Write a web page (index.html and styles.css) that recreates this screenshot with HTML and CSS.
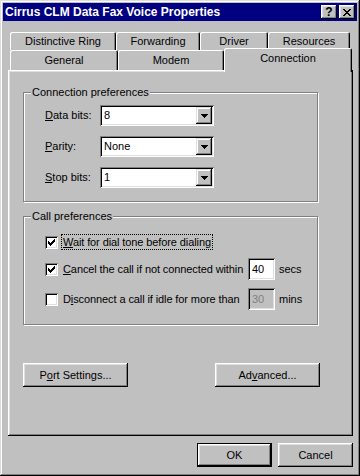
FILE: index.html
```html
<!DOCTYPE html>
<html lang="en">
	<head>
		<meta charset="UTF-8" />
		<title>Cirrus CLM Data Fax Voice Properties</title>
		<link rel="stylesheet" href="styles.css">
	</head>

	<body>
		<div class="window">
			<header class="titlebar">
				<span class="titlebar-text">Cirrus CLM Data Fax Voice Properties</span>
				<div class="titlebar-buttons">
					<span class="caption-btn caption-btn_help">?</span>
					<span class="caption-btn">
						<svg width="8" height="7" viewBox="0 0 8 7" shape-rendering="crispEdges"><path d="M0 0h2v1h-2z M6 0h2v1h-2z M1 1h2v1h-2z M5 1h2v1h-2z M2 2h4v1h-4z M3 3h2v1h-2z M2 4h4v1h-4z M1 5h2v1h-2z M5 5h2v1h-2z M0 6h2v1h-2z M6 6h2v1h-2z" fill="#000"/></svg>
					</span>
				</div>
			</header>

			<div class="sheet">
				<div class="tabs">
					<div class="tab-row tab-row_back">
						<div class="tab tab_ring">Distinctive Ring</div>
						<div class="tab tab_forwarding">Forwarding</div>
						<div class="tab tab_driver">Driver</div>
						<div class="tab tab_resources">Resources</div>
					</div>
					<div class="tab-row tab-row_front">
						<div class="tab tab_general">General</div>
						<div class="tab tab_modem">Modem</div>
						<div class="tab tab_connection tab_active">Connection</div>
					</div>
				</div>

				<main class="panel">
					<section class="group group_connection">
						<div class="group-title">Connection preferences</div>
						<div class="fields">
							<label class="field-label"><u>D</u>ata bits:</label>
							<div class="combo">
								<span class="combo-value">8</span>
								<span class="combo-btn"><svg width="7" height="4" viewBox="0 0 7 4" shape-rendering="crispEdges"><path d="M0 0h7v1h-7z M1 1h5v1h-5z M2 2h3v1h-3z M3 3h1v1h-1z" fill="#000"/></svg></span>
							</div>

							<label class="field-label"><u>P</u>arity:</label>
							<div class="combo">
								<span class="combo-value">None</span>
								<span class="combo-btn"><svg width="7" height="4" viewBox="0 0 7 4" shape-rendering="crispEdges"><path d="M0 0h7v1h-7z M1 1h5v1h-5z M2 2h3v1h-3z M3 3h1v1h-1z" fill="#000"/></svg></span>
							</div>

							<label class="field-label"><u>S</u>top bits:</label>
							<div class="combo">
								<span class="combo-value">1</span>
								<span class="combo-btn"><svg width="7" height="4" viewBox="0 0 7 4" shape-rendering="crispEdges"><path d="M0 0h7v1h-7z M1 1h5v1h-5z M2 2h3v1h-3z M3 3h1v1h-1z" fill="#000"/></svg></span>
							</div>
						</div>
					</section>

					<section class="group group_call">
						<div class="group-title">Call preferences</div>
						<div class="checks">
							<span class="checkbox"><svg width="7" height="7" viewBox="0 0 7 7" shape-rendering="crispEdges"><path d="M6 0h1v1h-1z M5 1h2v1h-2z M0 2h1v1h-1z M4 2h3v1h-3z M0 3h2v1h-2z M3 3h3v1h-3z M0 4h5v1h-5z M1 5h3v1h-3z M2 6h1v1h-1z" fill="#000"/></svg></span>
							<span class="check-label check-label_focus"><u>W</u>ait for dial tone before dialing</span>
							<span></span>
							<span></span>

							<span class="checkbox"><svg width="7" height="7" viewBox="0 0 7 7" shape-rendering="crispEdges"><path d="M6 0h1v1h-1z M5 1h2v1h-2z M0 2h1v1h-1z M4 2h3v1h-3z M0 3h2v1h-2z M3 3h3v1h-3z M0 4h5v1h-5z M1 5h3v1h-3z M2 6h1v1h-1z" fill="#000"/></svg></span>
							<span class="check-label"><u>C</u>ancel the call if not connected within</span>
							<span class="edit">40</span>
							<span class="unit">secs</span>

							<span class="checkbox"></span>
							<span class="check-label">D<u>i</u>sconnect a call if idle for more than</span>
							<span class="edit edit_disabled">30</span>
							<span class="unit">mins</span>
						</div>
					</section>

					<div class="panel-buttons">
						<span class="btn btn_wide">P<u>o</u>rt Settings...</span>
						<span class="btn btn_wide">Ad<u>v</u>anced...</span>
					</div>
				</main>

				<footer class="dialog-buttons">
					<span class="btn btn_default">OK</span>
					<span class="btn">Cancel</span>
				</footer>
			</div>
		</div>
	</body>
</html>
```

FILE: styles.css
```css
html {
	box-sizing: border-box;
}

*,
*::after,
*::before {
	box-sizing: inherit;
}

body {
	margin: 0;
	background-color: #c0c0c0;
	color: #000;
	font-family: "Liberation Sans", Arial, sans-serif;
	font-size: 11px;
	line-height: 13px;
}

u {
	text-decoration-thickness: 1px;
	text-underline-offset: 1px;
}

.window {
	display: flex;
	flex-direction: column;
	width: 360px;
	height: 476px;
	padding: 3px;
	background-color: #c0c0c0;
	box-shadow: inset -1px -1px #000, inset 1px 1px #dfdfdf, inset -2px -2px #808080, inset 2px 2px #fff;
}

/* title bar */

.titlebar {
	display: flex;
	align-items: center;
	justify-content: space-between;
	height: 18px;
	padding: 0 2px;
	background-color: #000080;
	color: #fff;
}

.titlebar-text {
	font-size: 12px;
	font-weight: 700;
}

.titlebar-buttons {
	display: flex;
	gap: 2px;
}

.caption-btn {
	display: flex;
	align-items: center;
	justify-content: center;
	width: 16px;
	height: 14px;
	background-color: #c0c0c0;
	color: #000;
	font-weight: 700;
	box-shadow: inset -1px -1px #000, inset 1px 1px #fff, inset -2px -2px #808080, inset 2px 2px #dfdfdf;
}

.caption-btn_help {
	font-size: 12px;
	padding-top: 1px;
}

/* tabs */

.sheet {
	padding: 11px 4px 0 5px;
}

.tabs {
	padding-left: 2px;
}

.tab-row {
	display: flex;
}

.tab-row_back {
	height: 18px;
}

.tab-row_front {
	height: 20px;
	align-items: flex-start;
}

.tab {
	display: flex;
	justify-content: center;
	padding-top: 3px;
	background-color: #c0c0c0;
	border-radius: 2px 2px 0 0;
	box-shadow: inset 1px 1px #fff, inset -1px 0 #000, inset -2px 0 #808080;
}

.tab-row_back .tab {
	height: 18px;
}

.tab-row_front .tab {
	height: 20px;
	padding-top: 4px;
}

.tab_ring { width: 106px; }
.tab_forwarding { width: 84px; }
.tab_driver { width: 68px; }
.tab_resources { width: 82px; }
.tab_general { width: 108px; }
.tab_modem { width: 106px; }
.tab_connection { width: 128px; }

.tab-row_front .tab_active {
	position: relative;
	z-index: 1;
	height: 24px;
	margin-top: -2px;
	padding-top: 4px;
}

/* panel */

.panel {
	display: flex;
	flex-direction: column;
	align-items: flex-start;
	height: 366px;
	padding: 22px 0 0 15px;
	background-color: #c0c0c0;
	box-shadow: inset -1px -1px #000, inset 1px 1px #fff, inset -2px -2px #808080, inset 2px 2px #dfdfdf;
}

.group {
	width: 295px;
	border: 1px solid #808080;
	box-shadow: inset 1px 1px #fff, 1px 1px #fff;
}

.group_connection {
	height: 110px;
}

.group_call {
	height: 109px;
	margin-top: 14px;
}

.group-title {
	width: fit-content;
	margin: -7px 0 0 7px;
	padding: 0 1px;
	background-color: #c0c0c0;
}

.fields {
	display: grid;
	grid-template-columns: 55px 114px;
	row-gap: 10px;
	align-items: center;
	padding: 6px 0 0 21px;
}

.combo {
	display: flex;
	align-items: center;
	height: 21px;
	padding: 2px;
	background-color: #fff;
	box-shadow: inset 1px 1px #808080, inset -1px -1px #fff, inset 2px 2px #000, inset -2px -2px #dfdfdf;
}

.combo-value {
	flex-grow: 1;
	padding-left: 2px;
}

.combo-btn {
	display: flex;
	align-items: center;
	justify-content: center;
	width: 16px;
	height: 17px;
	background-color: #c0c0c0;
	box-shadow: inset -1px -1px #000, inset 1px 1px #dfdfdf, inset -2px -2px #808080, inset 2px 2px #fff;
}

.checks {
	display: grid;
	grid-template-columns: 13px 184px 27px auto;
	grid-template-rows: 16px 22px 22px;
	column-gap: 3px;
	row-gap: 8px;
	align-items: center;
	padding: 11px 0 0 21px;
}

.checkbox {
	display: flex;
	align-items: center;
	justify-content: center;
	width: 13px;
	height: 13px;
	background-color: #fff;
	box-shadow: inset 1px 1px #808080, inset -1px -1px #fff, inset 2px 2px #000, inset -2px -2px #dfdfdf;
}

.check-label {
	justify-self: start;
	padding: 0 1px;
	border: 1px solid transparent;
	line-height: 14px;
	white-space: nowrap;
	letter-spacing: -0.1px;
}

.check-label_focus {
	border: 1px dotted #000;
}

.edit {
	display: flex;
	align-items: center;
	height: 22px;
	padding: 0 4px;
	background-color: #fff;
	box-shadow: inset 1px 1px #808080, inset -1px -1px #fff, inset 2px 2px #000, inset -2px -2px #dfdfdf;
}

.edit_disabled {
	background-color: #c0c0c0;
	color: #808080;
}

.unit {
	padding-left: 1px;
}

/* buttons */

.btn {
	display: flex;
	align-items: center;
	justify-content: center;
	width: 75px;
	height: 24px;
	background-color: #c0c0c0;
	box-shadow: inset -1px -1px #000, inset 1px 1px #fff, inset -2px -2px #808080, inset 2px 2px #dfdfdf;
}

.btn_wide {
	width: 105px;
}

.btn_default {
	border: 1px solid #000;
}

.panel-buttons {
	display: flex;
	justify-content: space-between;
	width: 297px;
	margin-top: 38px;
}

.dialog-buttons {
	display: flex;
	justify-content: flex-end;
	gap: 6px;
	margin-top: 7px;
}
```
